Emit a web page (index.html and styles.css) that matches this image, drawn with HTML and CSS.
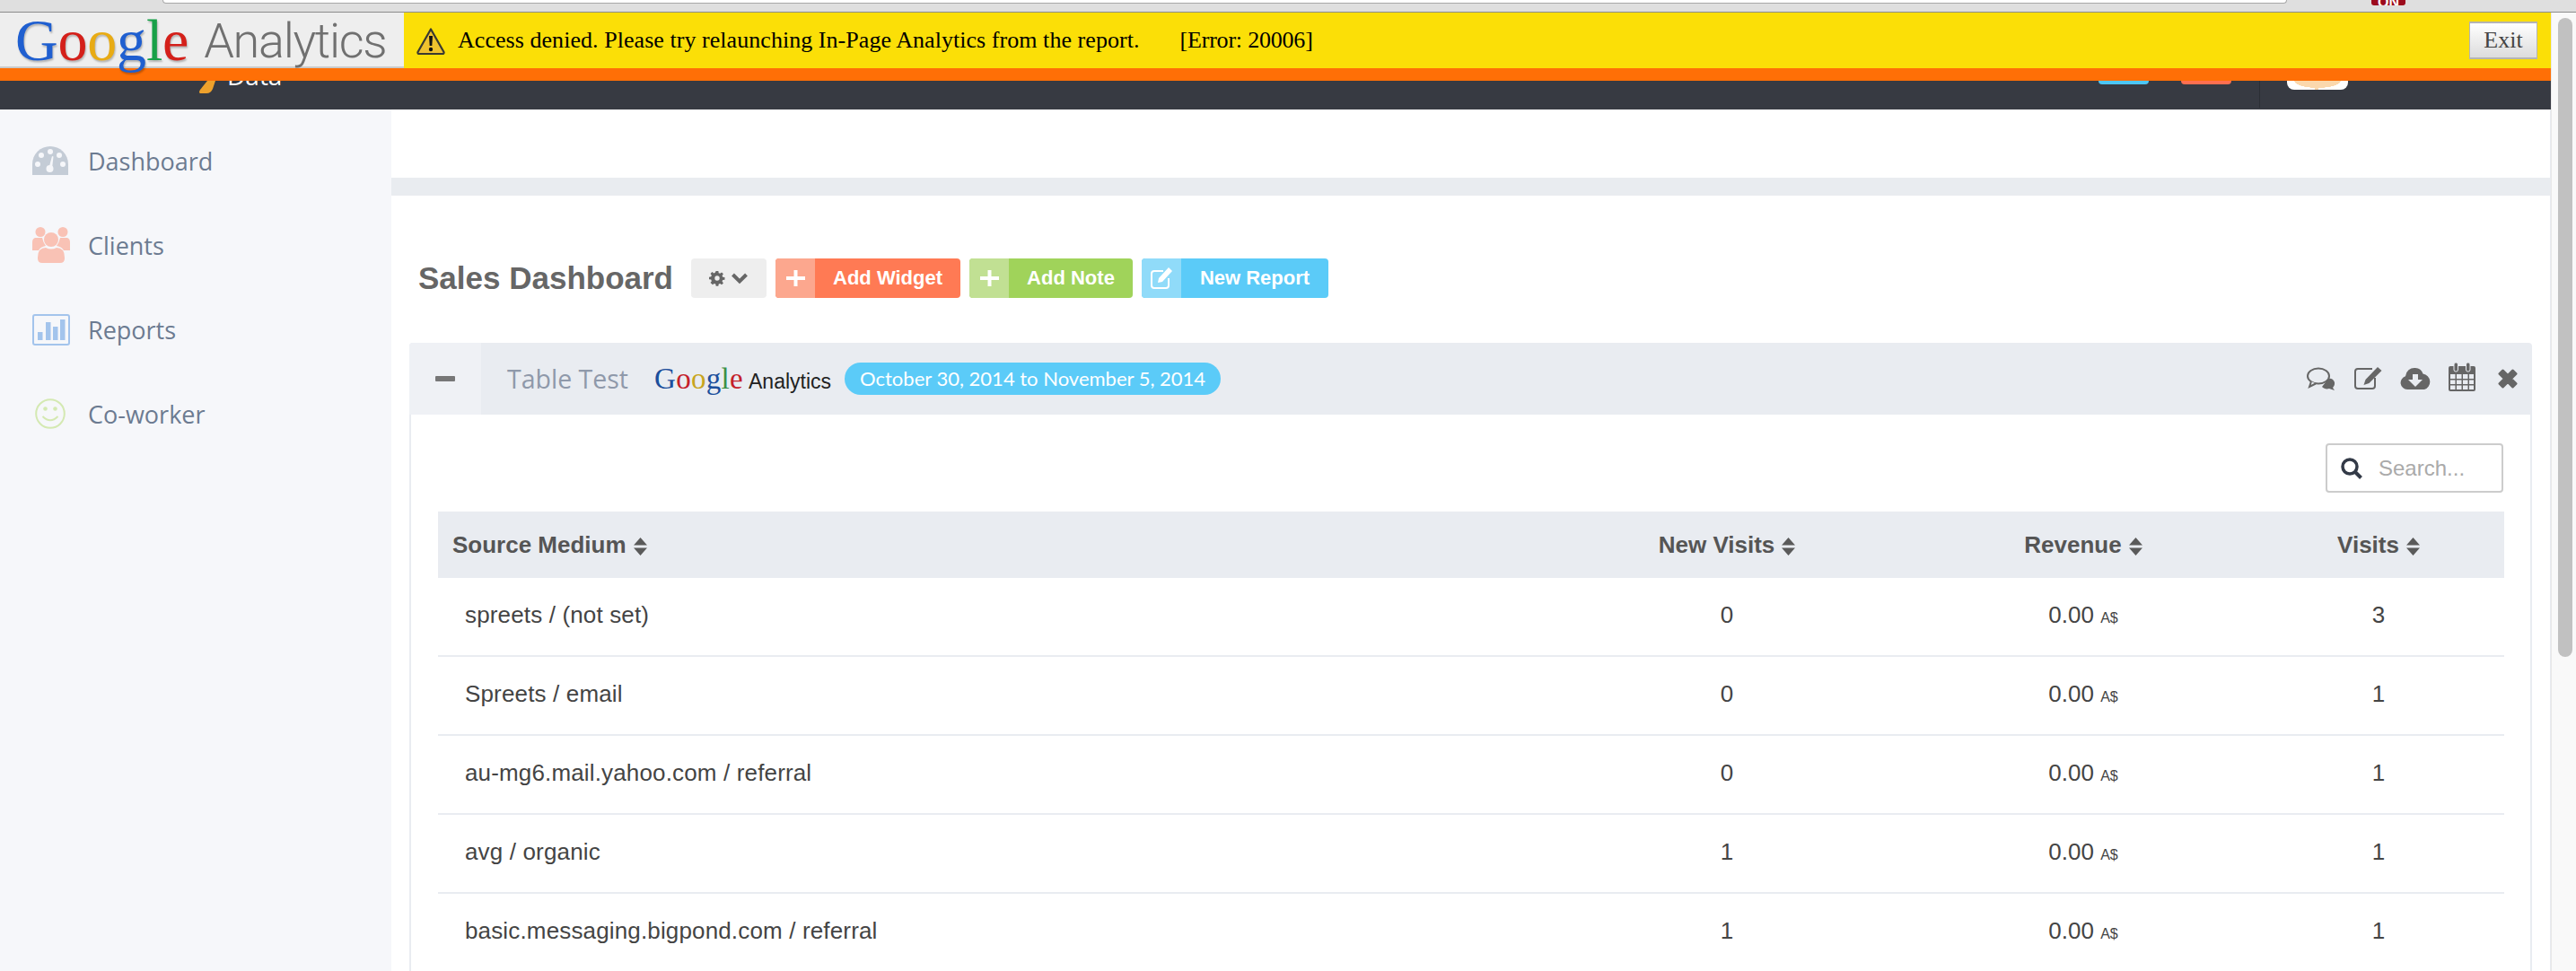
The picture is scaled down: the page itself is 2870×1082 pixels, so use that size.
FILE: index.html
```html
<!DOCTYPE html>
<html lang="en">
<head>
<meta charset="utf-8">
<title>Sales Dashboard</title>
<link rel="stylesheet" href="styles.css">
</head>
<body>
<div class="chrome">
  <div class="address"></div>
  <div class="ext-badge">ON</div>
</div>
<div class="window">
  <div class="page">
    <div class="ga-bar">
      <div class="ga-logo">
        <span class="ga-google"><span class="c-blue">G</span><span class="c-red">o</span><span class="c-yellow">o</span><span class="c-blue">g</span><span class="c-green">l</span><span class="c-red">e</span></span>
        <span class="ga-analytics">Analytics</span>
      </div>
      <div class="ga-msg">
        <svg class="warn" width="32" height="30" viewBox="0 0 32 30"><path d="M16 1.500 30.500 27a1.500 1.500 0 0 1-1.300 2H2.800a1.500 1.500 0 0 1-1.300-2z" fill="#efc22e" stroke="#3a3a30" stroke-width="2.200" stroke-linejoin="round"/><path d="M14 9h4l-.7 11h-2.600z" fill="#111"/><circle cx="16" cy="24" r="2.200" fill="#111"/></svg>
        <span class="ga-text">Access denied. Please try relaunching In-Page Analytics from the report.</span>
        <span class="ga-err">[Error: 20006]</span>
        <button class="exit">Exit</button>
      </div>
    </div>
    <div class="orange"></div>
    <header class="topbar">
      <svg class="feather" width="18" height="14" viewBox="0 0 18 14"><path d="M9 0h9l-3 9q-2 5-7 5H1q-2-1 0-4z" fill="#eea12c"/></svg>
      <span class="brand">Data</span>
      <div class="top-right">
        <span class="tab tab-blue"></span>
        <span class="tab tab-coral"></span>
        <span class="divider"></span>
        <span class="avatar"></span>
      </div>
    </header>
    <div class="main">
      <nav class="sidebar">
        <a class="nav-item">
          <span class="nav-icon"><svg width="40" height="32" viewBox="0 0 40 32"><path d="M0 32v-12a20 20 0 0 1 40 0v12z" fill="#c4ccd6"/><g fill="#f6f7fa"><circle cx="20" cy="6" r="3"/><circle cx="10" cy="10" r="3"/><circle cx="30" cy="10" r="3"/><circle cx="6" cy="20" r="3"/><circle cx="34" cy="20" r="3"/><circle cx="19.500" cy="25" r="4"/><path d="M18.500 24 22 11l1.500.5L22 25z"/></g></svg></span>
          <span class="nav-label">Dashboard</span>
        </a>
        <a class="nav-item">
          <span class="nav-icon"><svg width="42" height="40" viewBox="0 0 42 40"><g fill="#f9c2b5"><circle cx="9" cy="5.500" r="5.500"/><circle cx="34" cy="5.500" r="5.500"/><circle cx="21" cy="14" r="8"/><path d="M3 12h8q1 5 4 9-6 1-8 5H0v-9q0-4 3-5zM39 12h-8q-1 5-4 9 6 1 8 5h7v-9q0-4-3-5z"/><path d="M6 34q0-11 9-11 6 3 12 0 9 0 9 11v1q0 5-5 5H11q-5 0-5-5z"/></g></svg></span>
          <span class="nav-label">Clients</span>
        </a>
        <a class="nav-item">
          <span class="nav-icon"><svg width="42" height="35" viewBox="0 0 42 35"><rect x="1" y="1" width="40" height="33" rx="2" fill="none" stroke="#a3c4ec" stroke-width="2"/><g fill="#a3c4ec"><rect x="6" y="20" width="5.500" height="9"/><rect x="15" y="9" width="5.500" height="20"/><rect x="23" y="14" width="5.500" height="15"/><rect x="31" y="6" width="5.500" height="23"/></g></svg></span>
          <span class="nav-label">Reports</span>
        </a>
        <a class="nav-item">
          <span class="nav-icon nav-icon-smile"><svg width="34" height="34" viewBox="0 0 34 34"><circle cx="17" cy="17" r="15.800" fill="none" stroke="#d4e9b2" stroke-width="2"/><circle cx="11.500" cy="11.500" r="2.300" fill="#d4e9b2"/><circle cx="22.500" cy="11.500" r="2.300" fill="#d4e9b2"/><path d="M8.500 20q8.500 8.500 17 0" fill="none" stroke="#d4e9b2" stroke-width="2"/></svg></span>
          <span class="nav-label">Co-worker</span>
        </a>
      </nav>
      <main class="content">
        <div class="band"></div>
        <div class="title-row">
          <h1 class="title">Sales Dashboard</h1>
          <button class="gear-btn">
            <svg width="18" height="18" viewBox="0 0 18 18"><path fill="#666" fill-rule="evenodd" d="M7.500 0h3l.4 2.500 1.700.7 2-1.500 2.100 2.100-1.500 2 .7 1.700 2.500.4v3l-2.500.4-.7 1.700 1.500 2-2.100 2.100-2-1.500-1.700.7-.4 2.500h-3l-.4-2.500-1.700-.7-2 1.500L.7 14.500l1.500-2-.7-1.700L-1 10.500v-3l2.500-.4.7-1.700-1.500-2L2.800 1.300l2 1.500 1.700-.7zM9 6a3 3 0 1 0 0 6 3 3 0 0 0 0-6z" transform="translate(.9 .9) scale(.9)"/></svg>
            <svg width="20" height="14" viewBox="0 0 20 14"><path d="M2.500 3 10 10.500 17.500 3" fill="none" stroke="#666" stroke-width="4"/></svg>
          </button>
          <button class="act act-coral"><span class="act-icon"><svg width="21" height="18" viewBox="0 0 21 18"><path d="M8.500 0h4v7H21v4h-8.500v7h-4v-7H0V7h8.500z" fill="#fff"/></svg></span><span class="act-label">Add Widget</span></button>
          <button class="act act-green"><span class="act-icon"><svg width="21" height="18" viewBox="0 0 21 18"><path d="M8.500 0h4v7H21v4h-8.500v7h-4v-7H0V7h8.500z" fill="#fff"/></svg></span><span class="act-label">Add Note</span></button>
          <button class="act act-blue"><span class="act-icon"><svg width="26" height="26" viewBox="0 0 26 26"><path d="M15 5H5a3 3 0 0 0-3 3v13a3 3 0 0 0 3 3h13a3 3 0 0 0 3-3v-8" fill="none" stroke="#fff" stroke-width="2"/><path d="M21 1l4 4-11 12-5 1 1-5z" fill="#fff"/></svg></span><span class="act-label">New Report</span></button>
        </div>
        <section class="panel">
          <div class="panel-head">
            <div class="collapse"><span class="minus"></span></div>
            <span class="panel-name">Table Test</span>
            <span class="mini-ga"><span class="mini-google"><span class="d-blue">G</span><span class="d-red">o</span><span class="d-yellow">o</span><span class="d-blue">g</span><span class="d-green">l</span><span class="d-red">e</span></span><span class="mini-analytics">Analytics</span></span>
            <span class="pill">October 30, 2014 to November 5, 2014</span>
            <div class="panel-tools">
              <svg width="32" height="26" viewBox="0 0 32 26"><path d="M24 13c2-1 6 0 7 4 .5 3-1 5-2 6l2 3-6-2c-3 1-6 0-8-2" fill="#666"/><ellipse cx="13" cy="10" rx="12" ry="8.500" fill="#e9ecf1" stroke="#666" stroke-width="2"/><path d="M5 16l-2 6 7-3.500" fill="#e9ecf1" stroke="#666" stroke-width="2"/></svg>
              <svg width="32" height="26" viewBox="0 0 32 26"><path d="M21 2H5a3 3 0 0 0-3 3v16a3 3 0 0 0 3 3h16a3 3 0 0 0 3-3v-9" fill="none" stroke="#666" stroke-width="2"/><path d="M27 0l4.500 4-14 14-6 2 2-6z" fill="#666"/></svg>
              <svg width="34" height="26" viewBox="0 0 34 26"><path fill="#666" fill-rule="evenodd" d="M8 25a7.500 7.500 0 0 1-2-14.700A10 10 0 0 1 17 1a9.500 9.500 0 0 1 8.500 6.500A9 9 0 0 1 27 25zM14 8v6H9l8 8 8-8h-5V8z"/></svg>
              <svg class="tool-cal" width="30" height="32" viewBox="0 0 30 32"><rect x="0" y="4" width="30" height="28" rx="2" fill="#666"/><g fill="#e9ecf1"><rect x="2" y="13" width="5.500" height="5"/><rect x="9" y="13" width="5.500" height="5"/><rect x="16" y="13" width="5.500" height="5"/><rect x="23" y="13" width="5" height="5"/><rect x="2" y="19.500" width="5.500" height="4.500"/><rect x="9" y="19.500" width="5.500" height="4.500"/><rect x="16" y="19.500" width="5.500" height="4.500"/><rect x="23" y="19.500" width="5" height="4.500"/><rect x="2" y="25.500" width="5.500" height="4.500"/><rect x="9" y="25.500" width="5.500" height="4.500"/><rect x="16" y="25.500" width="5.500" height="4.500"/><rect x="23" y="25.500" width="5" height="4.500"/></g><rect x="6" y="0" width="4.500" height="10" rx="2" fill="#666" stroke="#e9ecf1"/><rect x="19.500" y="0" width="4.500" height="10" rx="2" fill="#666" stroke="#e9ecf1"/></svg>
              <svg class="tool-x" width="22" height="22" viewBox="0 0 22 22"><path d="M2 5.500 5.500 2 11 7.500 16.500 2 20 5.500 14.500 11 20 16.500 16.500 20 11 14.500 5.500 20 2 16.500 7.500 11z" fill="#666" stroke="#666" stroke-width="3" stroke-linejoin="round"/></svg>
            </div>
          </div>
          <div class="panel-body">
            <div class="search-row">
              <label class="search">
                <svg width="24" height="24" viewBox="0 0 24 24"><circle cx="10" cy="10" r="8" fill="none" stroke="#333a47" stroke-width="3.500"/><path d="M16 16l6.500 6.500" stroke="#333a47" stroke-width="4"/></svg>
                <span class="search-ph">Search...</span>
              </label>
            </div>
            <table class="data">
              <colgroup><col class="col-a"><col class="col-b"><col class="col-c"><col class="col-d"></colgroup>
              <thead>
                <tr>
                  <th class="left">Source Medium<svg class="sort" width="15" height="20" viewBox="0 0 15 20"><path d="M7.500 0 15 8.500H0zM7.500 20 0 11.500h15z" fill="#5a5a5a"/></svg></th>
                  <th>New Visits<svg class="sort" width="15" height="20" viewBox="0 0 15 20"><path d="M7.500 0 15 8.500H0zM7.500 20 0 11.500h15z" fill="#5a5a5a"/></svg></th>
                  <th>Revenue<svg class="sort" width="15" height="20" viewBox="0 0 15 20"><path d="M7.500 0 15 8.500H0zM7.500 20 0 11.500h15z" fill="#5a5a5a"/></svg></th>
                  <th>Visits<svg class="sort" width="15" height="20" viewBox="0 0 15 20"><path d="M7.500 0 15 8.500H0zM7.500 20 0 11.500h15z" fill="#5a5a5a"/></svg></th>
                </tr>
              </thead>
              <tbody>
                <tr><td class="left">spreets / (not set)</td><td>0</td><td>0.00 <small>A$</small></td><td>3</td></tr>
                <tr><td class="left">Spreets / email</td><td>0</td><td>0.00 <small>A$</small></td><td>1</td></tr>
                <tr><td class="left">au-mg6.mail.yahoo.com / referral</td><td>0</td><td>0.00 <small>A$</small></td><td>1</td></tr>
                <tr><td class="left">avg / organic</td><td>1</td><td>0.00 <small>A$</small></td><td>1</td></tr>
                <tr><td class="left">basic.messaging.bigpond.com / referral</td><td>1</td><td>0.00 <small>A$</small></td><td>1</td></tr>
              </tbody>
            </table>
          </div>
        </section>
      </main>
    </div>
  </div>
  <div class="scrollbar"><div class="thumb"></div></div>
</div>
</body>
</html>
```

FILE: styles.css
```css
* { box-sizing: border-box; }
html, body { margin: 0; padding: 0; height: 1082px; overflow: hidden; background: #fff; }
body { font-family: "Liberation Sans", Arial, sans-serif; color: #444; display: flex; flex-direction: column; }

.chrome { height: 14px; flex: none; display: flex; background: #dfdfdf; border-bottom: 1px solid #8c8c8c; padding-left: 181px; overflow: hidden; }
.address { width: 2367px; height: 4px; background: #fff; border: 1px solid #a8a8a8; border-top: 0; border-radius: 0 0 8px 8px; }
.ext-badge { margin-left: 94px; width: 38px; height: 6px; background: #9c0b1c; border-radius: 0 0 3px 3px; color: #fff; font-weight: bold; font-size: 16px; line-height: 6px; text-align: center; overflow: hidden; }

.window { flex: 1; display: flex; min-height: 0; }
.page { width: 2842px; flex: none; display: flex; flex-direction: column; min-height: 0; }

.ga-bar { height: 62px; flex: none; display: flex; position: relative; z-index: 2; }
.ga-logo { width: 450px; flex: none; background: #eee; border-bottom: 2px solid #c9c9c9; padding-left: 17px; display: flex; align-items: flex-start; }
.ga-google { font-family: "Liberation Serif", serif; font-size: 66px; line-height: 62px; letter-spacing: -.2px; height: 62px; text-shadow: 1px 2px 2px rgba(0,0,0,.25); }
.ga-analytics { font-family: Roboto, sans-serif; font-weight: 300; font-size: 54px; line-height: 64px; letter-spacing: -1.300px; color: #707070; margin-left: 17px; }
.c-blue { color: #1f5fd0; } .c-red { color: #d4201a; } .c-yellow { color: #e8ab14; } .c-green { color: #18a048; }
.ga-msg { flex: 1; background: #fbdf07; display: flex; align-items: center; padding-left: 14px; padding-right: 15px; color: #000; font-family: "Liberation Serif", serif; font-size: 26px; }
.warn { flex: none; margin-right: 14px; margin-top: 2px; }
.ga-text { letter-spacing: .05px; }
.ga-err { margin-left: 45px; letter-spacing: -.2px; }
.exit { margin-left: auto; width: 76px; height: 42px; font-family: "Liberation Serif", serif; font-size: 26px; color: #444; background: linear-gradient(#fff, #dcdcdc); border: 1px solid #b4b4b4; border-top-width: 2px; border-bottom-width: 2px; padding: 0; }

.orange { height: 14px; flex: none; background: #ff6f06; }

.topbar { height: 32px; flex: none; background: #373a42; display: flex; align-items: flex-start; overflow: hidden; padding: 0 226px 0 222px; }
.feather { flex: none; }
.brand { margin-left: 13px; margin-top: -25px; font-family: "Open Sans", sans-serif; font-size: 28px; line-height: 38px; color: #fff; }
.top-right { margin-left: auto; display: flex; align-items: flex-start; }
.tab { width: 56px; height: 4px; border-radius: 0 0 4px 4px; }
.tab-blue { background: #4cc6f5; margin-right: 36px; }
.tab-coral { background: #ff6f50; margin-right: 31px; }
.divider { width: 1px; height: 30px; background: #2c2e34; margin-right: 30px; }
.avatar { width: 68px; height: 10px; border-radius: 0 0 8px 8px; background: radial-gradient(ellipse 26px 8px at 50% 0, #fbd8ad 98%, transparent 100%), linear-gradient(90deg, transparent 46%, #fbd8ad 46%, #fbd8ad 52%, transparent 52%), #fff; }

.main { flex: 1; display: flex; min-height: 0; }
.sidebar { width: 436px; flex: none; background: #f6f7fa; padding-top: 10px; }
.nav-item { height: 94px; display: flex; align-items: center; padding-left: 36px; }
.nav-icon { width: 63px; flex: none; display: flex; align-items: center; }
.nav-icon-smile { padding-left: 3px; }
.nav-label { font-family: "Open Sans", sans-serif; font-size: 27px; color: #6c7b91; margin-left: -1px; }

.content { flex: 1; min-width: 0; padding-top: 76px; border-right: 1px solid #e8ebef; overflow: hidden; }
.band { height: 20px; background: #e9ecf0; }
.title-row { display: flex; align-items: center; height: 44px; margin: 70px 0 50px; padding-left: 30px; }
.title { margin: 0 20px 0 0; font-size: 35px; font-weight: bold; color: #666; }
.gear-btn { width: 84px; height: 44px; background: #eee; border: 0; border-radius: 4px; display: flex; align-items: center; padding: 0 0 0 20px; gap: 6px; margin-right: 10px; }
.act { height: 44px; border: 0; border-radius: 4px; overflow: hidden; padding: 0; display: flex; margin-right: 10px; font: bold 22px "Liberation Sans", Arial, sans-serif; color: #fff; }
.act-icon { width: 44px; flex: none; display: flex; align-items: center; justify-content: center; }
.act-label { flex: 1; display: flex; align-items: center; justify-content: center; }
.act-coral { width: 206px; background: #ff7a54; } .act-coral .act-icon { background: #fca78e; }
.act-green { width: 182px; background: #a0d35a; } .act-green .act-icon { background: #c1e093; }
.act-blue { width: 208px; background: #5bcbf8; } .act-blue .act-icon { background: #90dbf9; }

.panel { margin: 0 20px; }
.panel-head { height: 80px; background: #e9ecf1; border-radius: 4px 4px 0 0; display: flex; align-items: center; }
.collapse { width: 80px; height: 80px; flex: none; background: #eff1f5; border-radius: 4px 0 0 0; display: flex; align-items: center; justify-content: center; }
.minus { width: 22px; height: 6px; border-radius: 1px; background: #777; }
.panel-name { margin-left: 29px; font-family: "Open Sans", sans-serif; font-weight: 400; font-size: 28.500px; color: #8f99aa; }
.mini-ga { margin-left: 29px; display: flex; align-items: baseline; }
.mini-google { font-family: "Liberation Serif", serif; font-size: 33px; letter-spacing: .3px; }
.mini-analytics { margin-left: 6px; font-size: 23px; color: #222; }
.d-blue { color: #1c4f9c; } .d-red { color: #c4202a; } .d-yellow { color: #c8a51e; } .d-green { color: #3b8f46; }
.pill { margin-left: 15px; height: 36px; padding: 0 17px; border-radius: 18px; background: #5bcbf8; color: #fff; font-family: Lato, sans-serif; font-size: 22px; line-height: 36px; white-space: nowrap; }
.panel-tools { margin-left: auto; padding-right: 16px; display: flex; align-items: center; gap: 20px; }
.tool-cal { margin-top: -4px; }
.tool-x { margin-left: 5px; }

.panel-body { border: solid #e9ecf1; border-width: 0 2px; padding: 32px 30px 0; }
.search-row { display: flex; justify-content: flex-end; margin-bottom: 21px; }
.search { width: 198px; height: 55px; border: 2px solid #ccc; border-radius: 4px; display: flex; align-items: center; padding-left: 15px; gap: 18px; }
.search-ph { font-size: 24px; color: #aaa; }

.data { width: 2302px; border-collapse: separate; border-spacing: 0; table-layout: fixed; font-size: 26px; color: #444; }
.col-a { width: 1228px; } .col-b { width: 416px; } .col-c { width: 378px; } .col-d { width: 280px; }
.data th { height: 74px; background: #e9ecf1; font-weight: bold; color: #555; text-align: center; padding: 0; }
.data td { height: 88px; border-bottom: 2px solid #e9ecf1; text-align: center; padding: 0 0 4px; }
.data th.left { text-align: left; padding-left: 16px; }
.data td.left { text-align: left; padding-left: 30px; letter-spacing: .15px; }
.sort { margin-left: 8px; vertical-align: -3px; }
small { font-size: 16px; }

.scrollbar { flex: 1; background: #f9f9f9; border-left: 1px solid #e8e8e8; padding: 6px 4px 0 7px; }
.thumb { width: 16px; height: 712px; border-radius: 8px; background: #c1c1c1; }
```
